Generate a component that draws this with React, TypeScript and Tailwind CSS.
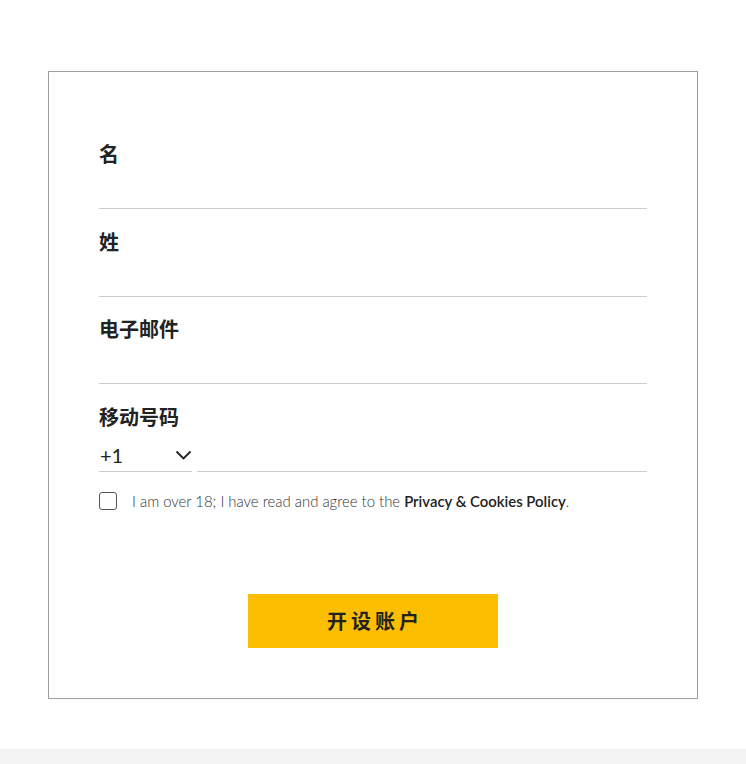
import { useState } from "react";

const cjk = { fontFamily: '"Noto Sans CJK SC", "Noto Sans", sans-serif' };
const latin = { fontFamily: 'Lato, "Noto Sans", sans-serif' };

function Field({ label, type = "text" }: { label: string; type?: string }) {
  return (
    <label className="block">
      <span className="block text-[20px] leading-[28px] font-bold text-[#222]" style={cjk}>
        {label}
      </span>
      <input
        type={type}
        className="block h-[41px] w-full border-b border-[#cccccc] bg-transparent text-[18px] text-[#222] outline-none"
        style={latin}
      />
    </label>
  );
}

export default function App() {
  const [agreed, setAgreed] = useState(false);

  return (
    <div className="min-h-[764px] bg-white">
      <div className="px-[48px] pt-[71px]">
        <form
          className="w-[650px] border border-[#9e9e9e] px-[50px] pt-[68px] pb-[50px]"
          onSubmit={(event) => event.preventDefault()}
        >
          <div className="space-y-[18.5px]">
            <Field label="名" />
            <Field label="姓" />
            <Field label="电子邮件" type="email" />

            <div>
              <span className="block text-[20px] leading-[28px] font-bold text-[#222]" style={cjk}>
                移动号码
              </span>
              <div className="flex gap-[5px]">
                <button
                  type="button"
                  className="flex h-[41.5px] w-[93px] items-end justify-between border-b border-[#cccccc] pl-[1px] pb-[6px] text-[20px] leading-none text-[#222]"
                  style={latin}
                >
                  <span>+1</span>
                  <svg width="17" height="10" viewBox="0 0 17 10" fill="none" className="mb-[5px]">
                    <path d="M1.5 1.5 8.5 8.5l7-7" stroke="#222" strokeWidth="1.8" />
                  </svg>
                </button>
                <input
                  type="tel"
                  className="block h-[41.5px] flex-1 border-b border-[#cccccc] bg-transparent text-[18px] outline-none"
                  style={latin}
                />
              </div>
            </div>
          </div>

          <label className="mt-[18px] flex items-center gap-[15px]">
            <input
              type="checkbox"
              checked={agreed}
              onChange={(event) => setAgreed(event.target.checked)}
              className="h-[18px] w-[18px] appearance-none rounded-[3px] border border-[#555] bg-white checked:bg-[#222]"
            />
            <span className="text-[14.9px] font-light text-[#333]" style={latin}>
              I am over 18; I have read and agree to the{" "}
              <span className="font-semibold text-[#222]">Privacy &amp; Cookies Policy</span>.
            </span>
          </label>

          <div className="mt-[82px] flex justify-center">
            <button
              type="submit"
              className="h-[54px] w-[250px] bg-[#fcbe00] pl-[4px] text-[20px] font-bold tracking-[4px] text-[#222]"
              style={cjk}
            >
              开设账户
            </button>
          </div>
        </form>
      </div>
      <div className="mt-[50px] h-[40px] bg-[#f3f3f3]" />
    </div>
  );
}
